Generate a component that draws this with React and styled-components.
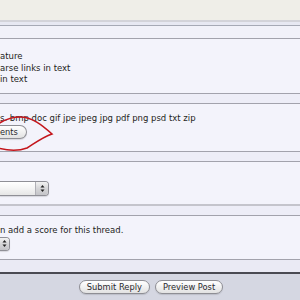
import React from "react";
import styled, { createGlobalStyle } from "styled-components";

const Global = createGlobalStyle`
  html, body { margin: 0; padding: 0; }
  body { width: 300px; height: 300px; overflow: hidden; }
`;

const Page = styled.div`
  position: relative;
  width: 300px;
  height: 300px;
  overflow: hidden;
  display: flex;
  flex-direction: column;
  background: #ececf6;
  font-family: "DejaVu Sans", Verdana, sans-serif;
  font-size: 8.5px;
  color: #1e1e22;
`;

const TopBar = styled.div`
  height: 20px;
  flex: none;
  background: #efeee8;
  border-bottom: 2px solid #d3d3d9;
`;

const Band = styled.div`
  height: 3px;
  flex: none;
  background: #e7e8f2;
  border-bottom: 1px solid #a6a9b5;
`;

const Strip = styled.div`
  height: ${(p) => p.$h}px;
  flex: none;
  background: ${(p) => p.$bg || "#ededf7"};
`;

const Panel = styled.div`
  height: ${(p) => p.$h}px;
  flex: none;
  box-sizing: content-box;
  background: #f3f3fb;
  border-top: 1px solid #a2a2ac;
  border-bottom: ${(p) => p.$bottom || "1px solid #a2a2ac"};
  padding-top: ${(p) => p.$pt}px;
  display: flex;
  flex-direction: column;
  align-items: flex-start;
`;

const Line = styled.div`
  line-height: 11.5px;
  white-space: nowrap;
`;

const PillButton = styled.button`
  font-family: "DejaVu Sans", Verdana, sans-serif;
  font-size: 8.3px;
  color: #2a2a2e;
  height: 14px;
  line-height: 12px;
  padding: ${(p) => (p.$clipped ? "0 8px 0 0" : "0 7px")};
  background: linear-gradient(#ffffff, #f1f1f1 50%, #e2e2e2);
  border: 1px solid #8e8e94;
  border-left: ${(p) => (p.$clipped ? "none" : "1px solid #8e8e94")};
  border-radius: ${(p) => (p.$clipped ? "0 7px 7px 0" : "7px")};
  box-shadow: 0 1px 1px rgba(0, 0, 0, 0.12);
  cursor: default;
`;

const Select = styled.div`
  margin-top: ${(p) => p.$mt || 0}px;
  width: ${(p) => p.$w}px;
  height: ${(p) => p.$h}px;
  display: flex;
  border: 1px solid #8f8f96;
  border-left: none;
  border-radius: 0 4px 4px 0;
  background: linear-gradient(#ffffff, #f4f4f4 50%, #e6e6e6);
  box-shadow: 0 1px 1px rgba(0, 0, 0, 0.12);
  overflow: hidden;
`;

const SelectBody = styled.div`
  flex: 1;
`;

const SelectCap = styled.div`
  width: ${(p) => p.$w}px;
  display: flex;
  align-items: center;
  justify-content: center;
  background: linear-gradient(#f2f2f2, #d6d6d8 50%, #c4c4c8);
  border-left: ${(p) => (p.$edge ? "1px solid #b0b0b6" : "none")};
`;

const Footer = styled.div`
  flex: 1;
  background: #d5d7e2;
  border-top: 2px solid #4a4a52;
  display: flex;
  justify-content: center;
  align-items: flex-start;
  gap: 5px;
  padding-top: 6px;
  padding-left: 2px;
`;

const Scribble = styled.svg`
  position: absolute;
  left: 0;
  top: 0;
  pointer-events: none;
`;

const Arrows = () => (
  <svg width="5" height="9" viewBox="0 0 5 9">
    <path d="M0.5 3.5 L2.5 1 L4.5 3.5 Z" fill="#222" />
    <path d="M0.5 5.5 L2.5 8 L4.5 5.5 Z" fill="#222" />
  </svg>
);

export default function App() {
  return (
    <>
      <Global />
      <Page>
        <TopBar />
        <Band />
        <Strip $h={12} $bg="#f1f1f9" />
        <Panel $h={42} $pt={12}>
          <Line>ature</Line>
          <Line>arse links in text</Line>
          <Line>in text</Line>
        </Panel>
        <Strip $h={9} />
        <Panel $h={38} $pt={9}>
          <Line>s. bmp doc gif jpe jpeg jpg pdf png psd txt zip</Line>
          <PillButton $clipped>ents</PillButton>
        </Panel>
        <Strip $h={9} />
        <Panel $h={23} $pt={19} $bottom="2px solid #c4c4cc">
          <Select $w={48} $h={13}>
            <SelectBody />
            <SelectCap $w={12} $edge>
              <Arrows />
            </SelectCap>
          </Select>
        </Panel>
        <Strip $h={9} />
        <Panel $h={34} $pt={9}>
          <Line>n add a score for this thread.</Line>
          <Select $w={9} $h={12}>
            <SelectCap $w={9}>
              <Arrows />
            </SelectCap>
          </Select>
        </Panel>
        <Strip $h={12} $bg="#eaeaf4" />
        <Footer>
          <PillButton>Submit Reply</PillButton>
          <PillButton>Preview Post</PillButton>
        </Footer>
        <Scribble width="300" height="300" viewBox="0 0 300 300">
          <path
            d="M -2 124 C 4 120, 10 117, 20 117 C 32 117, 42 125, 52 134 C 43 137, 35 143, 27 148 C 19 151, 9 151, -2 148"
            fill="none"
            stroke="#c4161c"
            strokeWidth="1.6"
            strokeLinecap="round"
            strokeLinejoin="miter"
          />
        </Scribble>
      </Page>
    </>
  );
}
